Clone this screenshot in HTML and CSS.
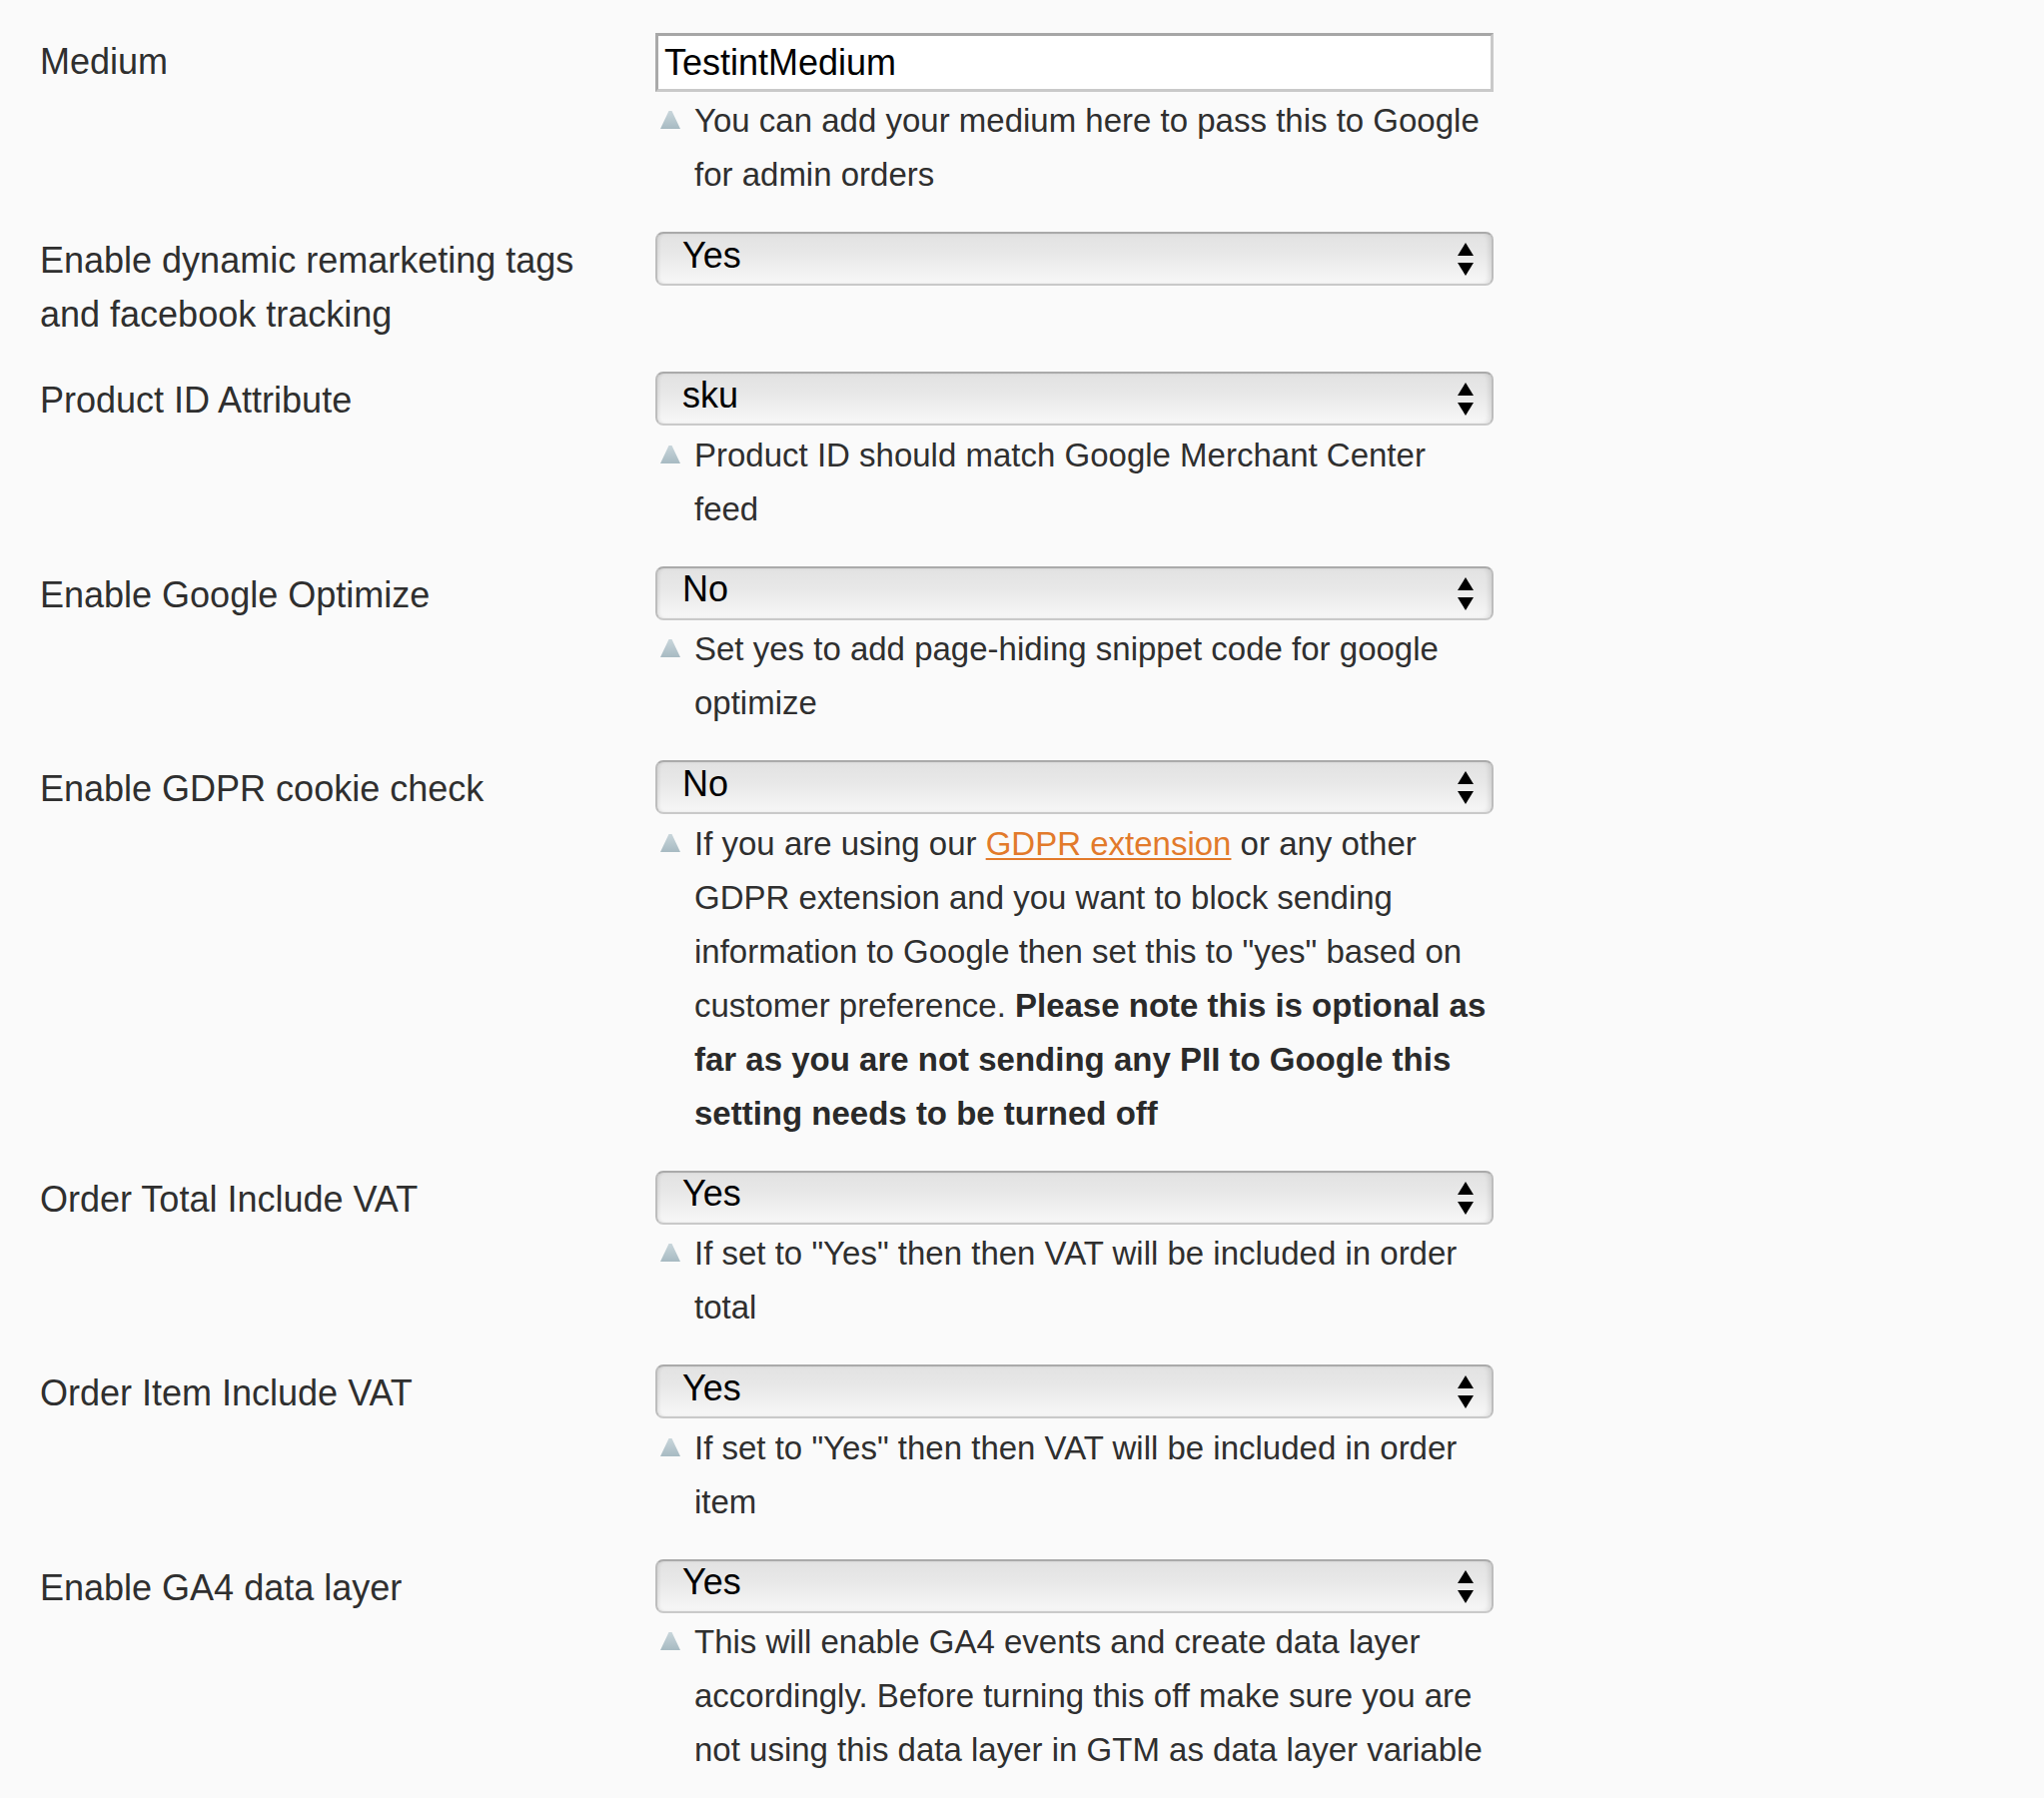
FILE: index.html
```html
<!DOCTYPE html>
<html lang="en">
<head>
<meta charset="utf-8">
<title>Configuration</title>
<link rel="stylesheet" href="styles.css">
</head>
<body>
<div class="config">
  <div class="label">Medium</div>
  <div class="value">
    <input class="input-text" type="text" value="TestintMedium">
    <div class="note"><svg class="note-icon" viewBox="0 0 20 18" width="20" height="18"><defs><linearGradient id="ng" x1="0" y1="0" x2="0" y2="1"><stop offset="0" stop-color="#c9d6db"/><stop offset="1" stop-color="#a7bac2"/></linearGradient></defs><polygon points="8.5,0 11.5,0 20,18 0,18" fill="url(#ng)"/></svg><p>You can add your medium here to pass this to Google for admin orders</p></div>
  </div>

  <div class="label">Enable dynamic remarketing tags and facebook tracking</div>
  <div class="value">
    <div class="select-wrap">
      <select class="select"><option selected>Yes</option><option>No</option></select>
      <svg class="select-arrows" viewBox="0 0 16 33" width="16" height="33"><polygon points="8,0 16,13 0,13" fill="#000"/><polygon points="0,20 16,20 8,33" fill="#000"/></svg>
    </div>
  </div>

  <div class="label">Product ID Attribute</div>
  <div class="value">
    <div class="select-wrap">
      <select class="select"><option selected>sku</option><option>id</option></select>
      <svg class="select-arrows" viewBox="0 0 16 33" width="16" height="33"><polygon points="8,0 16,13 0,13" fill="#000"/><polygon points="0,20 16,20 8,33" fill="#000"/></svg>
    </div>
    <div class="note"><svg class="note-icon" viewBox="0 0 20 18" width="20" height="18"><polygon points="8.5,0 11.5,0 20,18 0,18" fill="url(#ng)"/></svg><p>Product ID should match Google Merchant Center feed</p></div>
  </div>

  <div class="label">Enable Google Optimize</div>
  <div class="value">
    <div class="select-wrap">
      <select class="select"><option>Yes</option><option selected>No</option></select>
      <svg class="select-arrows" viewBox="0 0 16 33" width="16" height="33"><polygon points="8,0 16,13 0,13" fill="#000"/><polygon points="0,20 16,20 8,33" fill="#000"/></svg>
    </div>
    <div class="note"><svg class="note-icon" viewBox="0 0 20 18" width="20" height="18"><polygon points="8.5,0 11.5,0 20,18 0,18" fill="url(#ng)"/></svg><p>Set yes to add page-hiding snippet code for google optimize</p></div>
  </div>

  <div class="label">Enable GDPR cookie check</div>
  <div class="value">
    <div class="select-wrap">
      <select class="select"><option>Yes</option><option selected>No</option></select>
      <svg class="select-arrows" viewBox="0 0 16 33" width="16" height="33"><polygon points="8,0 16,13 0,13" fill="#000"/><polygon points="0,20 16,20 8,33" fill="#000"/></svg>
    </div>
    <div class="note"><svg class="note-icon" viewBox="0 0 20 18" width="20" height="18"><polygon points="8.5,0 11.5,0 20,18 0,18" fill="url(#ng)"/></svg><p>If you are using our <a href="#">GDPR extension</a> or any other GDPR extension and you want to block sending information to Google then set this to "yes" based on customer preference. <strong>Please note this is optional as far as you are not sending any PII to Google this setting needs to be turned off</strong></p></div>
  </div>

  <div class="label">Order Total Include VAT</div>
  <div class="value">
    <div class="select-wrap">
      <select class="select"><option selected>Yes</option><option>No</option></select>
      <svg class="select-arrows" viewBox="0 0 16 33" width="16" height="33"><polygon points="8,0 16,13 0,13" fill="#000"/><polygon points="0,20 16,20 8,33" fill="#000"/></svg>
    </div>
    <div class="note"><svg class="note-icon" viewBox="0 0 20 18" width="20" height="18"><polygon points="8.5,0 11.5,0 20,18 0,18" fill="url(#ng)"/></svg><p>If set to "Yes" then then VAT will be included in order total</p></div>
  </div>

  <div class="label">Order Item Include VAT</div>
  <div class="value">
    <div class="select-wrap">
      <select class="select"><option selected>Yes</option><option>No</option></select>
      <svg class="select-arrows" viewBox="0 0 16 33" width="16" height="33"><polygon points="8,0 16,13 0,13" fill="#000"/><polygon points="0,20 16,20 8,33" fill="#000"/></svg>
    </div>
    <div class="note"><svg class="note-icon" viewBox="0 0 20 18" width="20" height="18"><polygon points="8.5,0 11.5,0 20,18 0,18" fill="url(#ng)"/></svg><p>If set to "Yes" then then VAT will be included in order item</p></div>
  </div>

  <div class="label">Enable GA4 data layer</div>
  <div class="value">
    <div class="select-wrap">
      <select class="select"><option selected>Yes</option><option>No</option></select>
      <svg class="select-arrows" viewBox="0 0 16 33" width="16" height="33"><polygon points="8,0 16,13 0,13" fill="#000"/><polygon points="0,20 16,20 8,33" fill="#000"/></svg>
    </div>
    <div class="note"><svg class="note-icon" viewBox="0 0 20 18" width="20" height="18"><polygon points="8.5,0 11.5,0 20,18 0,18" fill="url(#ng)"/></svg><p>This will enable GA4 events and create data layer accordingly. Before turning this off make sure you are not using this data layer in GTM as data layer variable</p></div>
  </div>
</div>
</body>
</html>
```
FILE: styles.css
```css
html, body {
  margin: 0;
  padding: 0;
  background: #fafafa;
}

body {
  font-family: "Liberation Sans", Arial, Helvetica, sans-serif;
  font-size: 36px;
  line-height: 54px;
  color: #2f2f2f;
}

.config {
  display: grid;
  grid-template-columns: 616px 839px;
  row-gap: 30px;
  padding: 33px 0 40px 40px;
}

.label {
  padding: 2px 40px 0 0;
}

.value {
  display: flex;
  flex-direction: column;
}

.input-text {
  display: block;
  box-sizing: border-box;
  width: 839px;
  height: 59px;
  margin: 0;
  padding: 0 0 0 6px;
  border: 3px solid #c9c9c9;
  border-top-color: #a6a6a6;
  border-left-color: #a9a9a9;
  background: #fff;
  font-family: "Liberation Sans", Arial, Helvetica, sans-serif;
  font-size: 36px;
  color: #000;
  outline: none;
}

.select-wrap {
  position: relative;
  width: 839px;
}

.select {
  -webkit-appearance: none;
  appearance: none;
  display: block;
  box-sizing: border-box;
  width: 839px;
  height: 54px;
  margin: 0;
  padding: 0 60px 8px 25px;
  border: 2px solid #bdbdbd;
  border-top-color: #aaaaaa;
  border-bottom-color: #c9c9c9;
  border-radius: 8px;
  background: linear-gradient(to bottom, #e2e2e2 0%, #e8e8e8 40%, #f7f7f7 100%);
  box-shadow: inset 3px 0 3px -1px rgba(0, 0, 0, 0.07), inset -4px 0 4px -1px rgba(0, 0, 0, 0.09);
  font-family: "Liberation Sans", Arial, Helvetica, sans-serif;
  font-size: 36px;
  color: #000;
  outline: none;
}

.select-arrows {
  position: absolute;
  top: 11px;
  right: 20px;
  pointer-events: none;
}

.note {
  display: flex;
  align-items: flex-start;
  margin-top: 2.5px;
  font-size: 33px;
}

.input-text + .note {
  margin-top: 2px;
}

.note-icon {
  flex: none;
  margin: 17px 14px 0 5px;
}

.note p {
  margin: 0;
  width: 800px;
}

.note a {
  color: #e27a2b;
  text-decoration: underline;
  text-decoration-thickness: 2px;
  text-underline-offset: 3px;
}

.note strong {
  font-weight: bold;
  color: #2a2a2a;
}
```
